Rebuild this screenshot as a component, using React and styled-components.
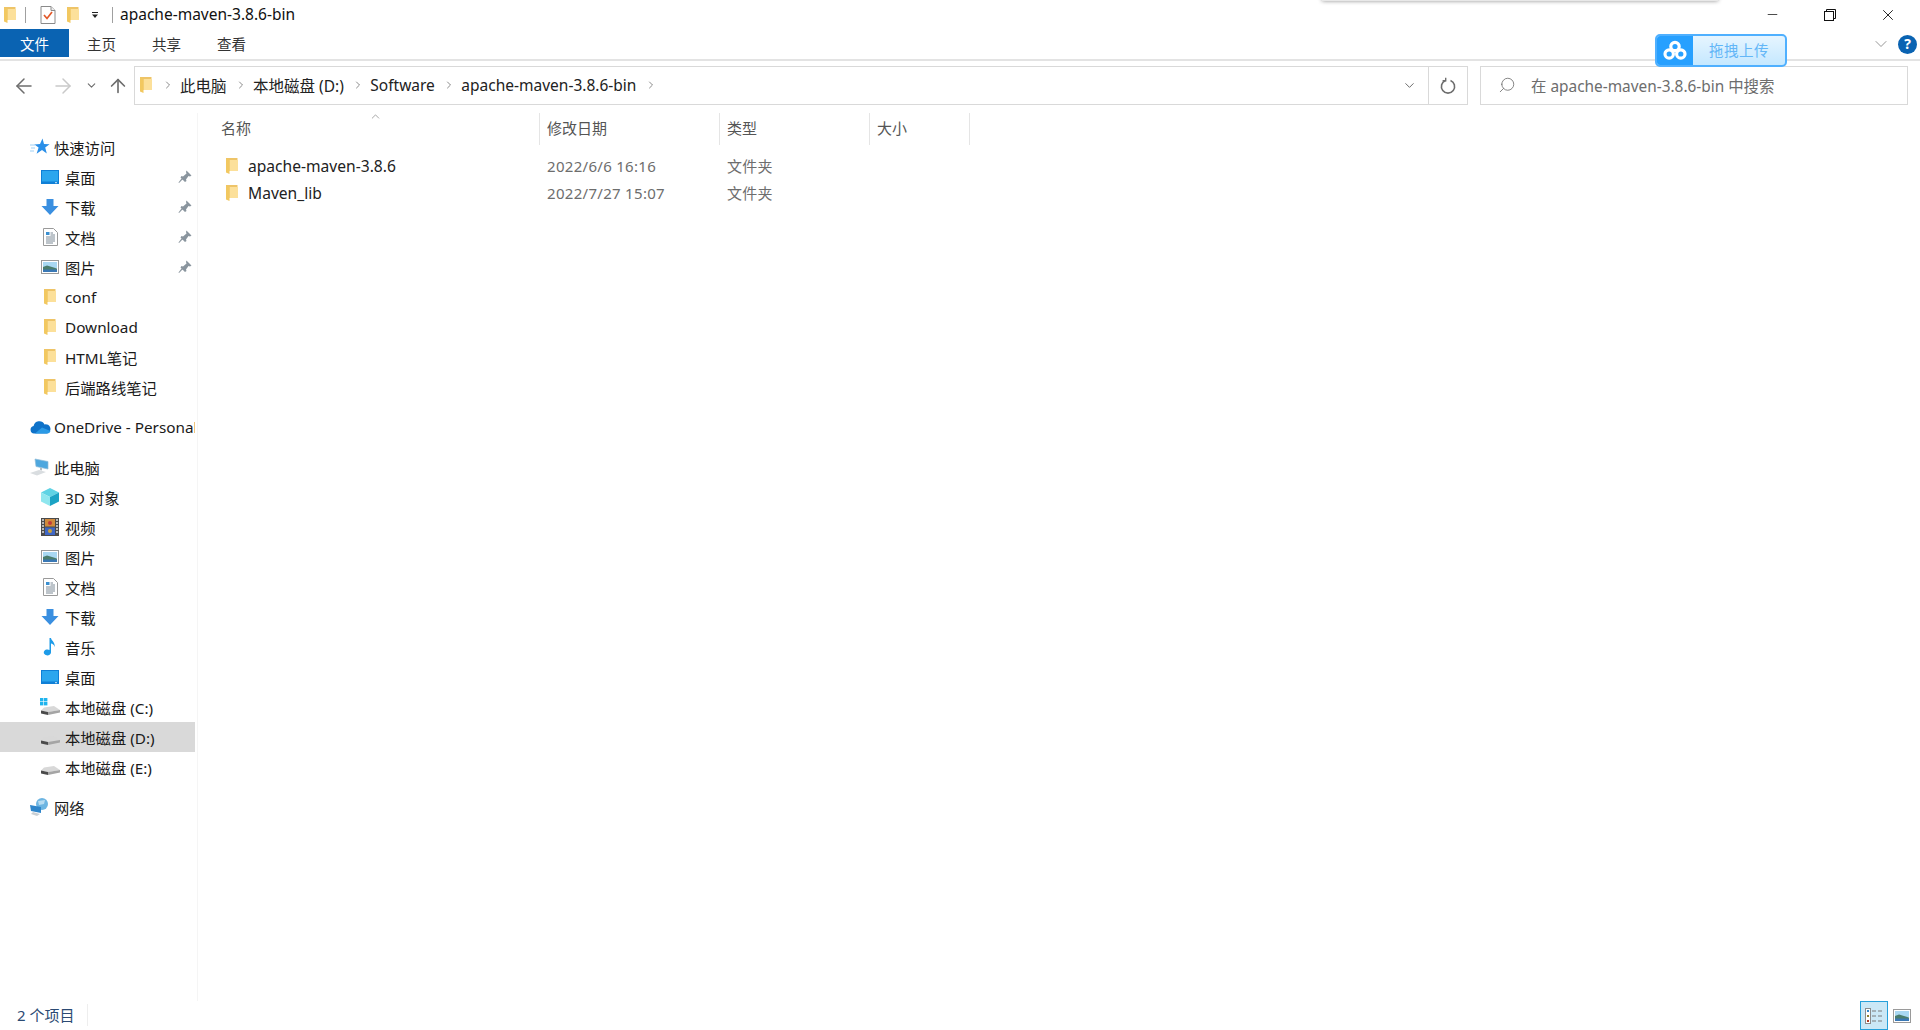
import React from 'react';
import styled, { createGlobalStyle } from 'styled-components';
import { ArrowLeft, ArrowRight, ArrowUp, ChevronDown, ChevronRight, ChevronUp, Search, Minus, X } from 'lucide-react';

const GlobalStyle = createGlobalStyle`
  html, body { margin: 0; padding: 0; background: #fff; }
  body {
    font-family: "Noto Sans", "Noto Sans CJK SC", sans-serif;
    font-size: 15.3px;
    color: #1a1a1a;
    overflow: hidden;
  }
`;

const Window = styled.div`
  position: relative;
  display: flex;
  flex-direction: column;
  width: 1920px;
  height: 1030px;
  overflow: hidden;
`;

const TopShadow = styled.div`
  position: absolute;
  top: -6px;
  left: 1322px;
  width: 396px;
  height: 7px;
  background: #e8e8e8;
  box-shadow: 0 0 4px rgba(0, 0, 0, 0.45);
`;

/* title bar */
const TitleBar = styled.div`
  display: flex;
  align-items: center;
  height: 29px;
  padding-left: 1px;
`;

const QuickTools = styled.div`
  display: flex;
  align-items: center;
`;

const ToolSep = styled.div`
  width: 1px;
  height: 16px;
  background: #a0a0a0;
  margin: ${(p) => p.$margin};
`;

const ToolSlot = styled.div`
  display: flex;
  margin-right: ${(p) => p.$right}px;
`;

const Title = styled.span`
  margin-left: 7px;
  margin-bottom: 1px;
  font-size: 15.5px;
  line-height: 20px;
  color: #111;
`;

const WinButtons = styled.div`
  display: flex;
  margin-left: auto;
  padding-right: 3px;
`;

const WinButton = styled.div`
  display: flex;
  align-items: center;
  justify-content: center;
  width: 58px;
  height: 29px;
  color: #111;
`;

/* ribbon tabs */
const TabBar = styled.div`
  display: flex;
  align-items: center;
  height: 32px;
  border-bottom: 2px solid #e3e3e3;
  box-sizing: border-box;
`;

const Tab = styled.div`
  display: flex;
  align-items: center;
  justify-content: center;
  width: ${(p) => (p.$active ? 69 : 65)}px;
  height: 28px;
  margin-bottom: 2px;
  font-size: 14.5px;
  color: ${(p) => (p.$active ? '#fff' : '#333')};
  background: ${(p) => (p.$active ? '#0a63b2' : 'transparent')};
`;

const RibbonEnd = styled.div`
  display: flex;
  align-items: center;
  gap: 7px;
  margin-left: auto;
  padding-right: 3px;
  color: #8c8c8c;
`;

const HelpBadge = styled.div`
  display: flex;
  align-items: center;
  justify-content: center;
  width: 19px;
  height: 19px;
  border-radius: 50%;
  background: #0a63b2;
  color: #fff;
  font-size: 14px;
  font-weight: 700;
  line-height: 1;
`;

const UploadWidget = styled.div`
  position: absolute;
  left: 1655px;
  top: 34px;
  display: flex;
  width: 132px;
  height: 33px;
  box-sizing: border-box;
  border: 2px solid #4fb0ff;
  border-radius: 5px;
  overflow: hidden;
  background: linear-gradient(#e6f5ff, #c5e8ff);
`;

const UploadIcon = styled.div`
  display: flex;
  align-items: center;
  justify-content: center;
  width: 36px;
  background: #27a0ff;
`;

const UploadLabel = styled.div`
  flex: 1;
  text-align: center;
  font-size: 14.5px;
  line-height: 29px;
  color: #62b6f7;
  letter-spacing: 0.5px;
`;

/* address row */
const AddressRow = styled.div`
  display: flex;
  align-items: center;
  height: 52px;
  box-sizing: border-box;
  padding: 5px 12px 8px 0;
`;

const NavButtons = styled.div`
  display: flex;
  align-items: center;
  width: 134px;
  flex: none;
`;

const NavButton = styled.div`
  display: flex;
  align-items: center;
  justify-content: center;
  width: ${(p) => p.$w}px;
  color: ${(p) => p.$color || '#6d6d6d'};
`;

const AddressBox = styled.div`
  display: flex;
  align-items: center;
  width: 1334px;
  height: 39px;
  box-sizing: border-box;
  border: 1px solid #d9d9d9;
  padding-left: 2px;
  flex: none;
`;

const Crumbs = styled.div`
  display: flex;
  align-items: center;
  flex: 1;
  padding-bottom: 1px;
`;

const Crumb = styled.span`
  font-size: 15.5px;
  color: #222;
  margin-right: 8.5px;
`;

const CrumbArrow = styled.span`
  display: flex;
  color: #6d6d6d;
  margin-left: ${(p) => p.$before ?? 0}px;
  margin-right: ${(p) => p.$after ?? 6}px;
`;

const DropCell = styled.div`
  display: flex;
  align-items: center;
  justify-content: center;
  width: 38px;
  height: 100%;
  color: #6d6d6d;
`;

const RefreshCell = styled.div`
  display: flex;
  align-items: center;
  justify-content: center;
  width: 38px;
  height: 100%;
  border-left: 1px solid #d9d9d9;
`;

const SearchBox = styled.div`
  display: flex;
  align-items: center;
  flex: 1;
  height: 39px;
  box-sizing: border-box;
  border: 1px solid #d9d9d9;
  margin-left: 12px;
  padding: 0 0 1px 17px;
  gap: 15px;
  font-size: 15.4px;
  color: #6d6d6d;
`;

const SearchGlass = styled(Search)`
  transform: scaleX(-1);
`;

/* body */
const Body = styled.div`
  display: flex;
  flex: 1;
  min-height: 0;
`;

const Side = styled.nav`
  width: 199px;
  flex: none;
  box-sizing: border-box;
  padding-top: 19px;
  background: linear-gradient(to right, #fff 197px, #f5f5f5 197px, #f5f5f5 198px, #fff 198px);
`;

const SideGroup = styled.div`
  margin-bottom: 10px;
`;

const SideRow = styled.div`
  position: relative;
  display: flex;
  align-items: center;
  width: 195px;
  height: 30px;
  box-sizing: border-box;
  padding-left: ${(p) => (p.$top ? 29 : 39)}px;
  gap: 5px;
  background: ${(p) => (p.$selected ? '#d9d9d9' : 'transparent')};
  white-space: nowrap;
  overflow: hidden;
`;

const SideIcon = styled.span`
  display: flex;
  align-items: center;
  justify-content: center;
  width: 22px;
  height: 22px;
  flex: none;
  margin-right: ${(p) => (p.$top ? -2 : -1)}px;
`;

const PinSlot = styled.span`
  position: absolute;
  left: 178px;
  top: 8px;
  display: flex;
`;

const Content = styled.main`
  flex: 1;
  min-width: 0;
`;

const HeaderRow = styled.div`
  display: flex;
  height: 32px;
`;

const HeaderCell = styled.div`
  position: relative;
  width: ${(p) => p.$w}px;
  box-sizing: border-box;
  padding-left: ${(p) => p.$pad}px;
  border-right: 1px solid #e5e5e5;
  font-size: 15px;
  line-height: 30px;
  color: #555;
`;

const SortMark = styled.span`
  position: absolute;
  left: 170px;
  top: -3px;
  display: flex;
  color: #777;
`;

const FileList = styled.div`
  padding-top: 7px;
`;

const FileRow = styled.div`
  display: flex;
  align-items: center;
  height: 27px;
`;

const NameCell = styled.div`
  display: flex;
  align-items: center;
  gap: 7px;
  width: 341px;
  box-sizing: border-box;
  padding-left: 24px;
  font-size: 15.6px;
  color: #222;
`;

const MetaCell = styled.div`
  width: ${(p) => p.$w}px;
  box-sizing: border-box;
  padding-left: 7px;
  font-size: 15px;
  letter-spacing: 0.3px;
  color: #6d6d6d;
`;

const StatusBar = styled.div`
  display: flex;
  align-items: center;
  height: 29px;
  flex: none;
  padding-left: 17px;
  font-size: 15px;
  color: #2b4a73;
`;

const StatusCount = styled.span`
  padding-right: 13px;
  margin-bottom: 2px;
  border-right: 1px solid #eee;
  line-height: 22px;
`;

const ViewButtons = styled.div`
  display: flex;
  align-items: center;
  margin-left: auto;
  padding-right: 9px;
  gap: 5px;
`;

const ViewButton = styled.div`
  display: flex;
  align-items: center;
  justify-content: center;
  width: 28px;
  height: 29px;
  box-sizing: border-box;
  border: 1px solid #26a0da;
  background: #cbe8f6;
`;

/* icons */
const FolderIcon = ({ size = 18 }) => (
  <svg width={size} height={size} viewBox="0 0 18 18">
    <path d="M3 1 H14.5 V14 H3 Z" fill="#eec468" />
    <path d="M6.5 3 H15 V14 H6.5 Z" fill="#fce09a" />
    <path d="M3 1 L6.5 3 V17 L3 15.5 Z" fill="#f2c860" />
  </svg>
);

const ChecklistIcon = () => (
  <svg width="16" height="18" viewBox="0 0 16 18">
    <path d="M1 .5 H11 L15 4.5 V17.5 H1 Z" fill="#fff" stroke="#8a8a8a" />
    <path d="M11 .5 V4.5 H15" fill="#eee" stroke="#8a8a8a" />
    <path d="M4 9 L7 12.5 L12 6" fill="none" stroke="#e2592a" strokeWidth="1.7" />
  </svg>
);

const DropMark = () => (
  <svg width="8" height="8" viewBox="0 0 8 8">
    <rect x="1" y="1" width="6" height="1" fill="#222" />
    <path d="M1 3.5 H7 L4 7 Z" fill="#222" />
  </svg>
);

const RestoreIcon = () => (
  <svg width="12" height="12" viewBox="0 0 12 12" fill="none" stroke="#111">
    <rect x=".5" y="2.5" width="9" height="9" />
    <path d="M2.5 2.5 V.5 H11.5 V9.5 H9.5" />
  </svg>
);

const RefreshIcon = () => (
  <svg width="18" height="18" viewBox="0 0 18 18" fill="none" stroke="#6d6d6d" strokeWidth="1.6">
    <path d="M11.5 3.4 A6.6 6.6 0 1 1 6.5 3.4" />
    <path d="M6.7 .8 V3.8 H3.6" strokeWidth="1.4" />
  </svg>
);

const CloudLogo = ({ size = 24 }) => (
  <svg width={size} height={size} viewBox="0 0 24 24" fill="none" stroke="#fff" strokeWidth="3.2">
    <circle cx="12" cy="7.5" r="4.2" />
    <circle cx="6.2" cy="15" r="4.2" />
    <circle cx="17.8" cy="15" r="4.2" />
  </svg>
);

const StarIcon = () => (
  <svg width="20" height="18" viewBox="0 0 20 18">
    <path d="M0 7 H5 M1 10 H5 M0 13 H4" stroke="#9fd0f5" strokeWidth="1" />
    <path d="M12.5 0.5 L14 6 L19.6 6.2 L15.2 9.6 L16.8 15.5 L12 12 L6.6 15.8 L8.6 9.6 L4.4 6.4 L10 6 Z" fill="#2a8fe8" />
  </svg>
);

const DesktopIcon = () => (
  <svg width="18" height="14" viewBox="0 0 18 14">
    <rect width="18" height="14" fill="#0f7fd6" />
    <rect x="1" y="1" width="16" height="10.5" fill="#2ba6ee" />
    <rect x="14" y="12.2" width="2" height="1" fill="#d0ecfb" />
  </svg>
);

const DownloadIcon = () => (
  <svg width="18" height="18" viewBox="0 0 18 18">
    <path d="M5.5 1 H12.5 V8 H17.5 L9 17 L.5 8 H5.5 Z" fill="#3a8fe0" />
  </svg>
);

const DocIcon = () => (
  <svg width="15" height="18" viewBox="0 0 15 18">
    <path d="M.5 .5 H10.5 L14.5 4.5 V17.5 H.5 Z" fill="#fff" stroke="#9a9a9a" />
    <rect x="3" y="4" width="3.5" height="3" fill="#3a8fd0" />
    <path d="M7.5 5 H10 M7.5 7 H12 M3 9 H12 M3 11 H12 M3 13 H12 M3 15 H10" stroke="#7d8a96" />
  </svg>
);

const PictureIcon = () => (
  <svg width="18" height="14" viewBox="0 0 18 14">
    <rect x=".5" y=".5" width="17" height="13" fill="#fff" stroke="#9a9a9a" />
    <rect x="2" y="2" width="14" height="6" fill="#a9d8f2" />
    <path d="M2 7 L6 5.5 L16 8.5 V10 H2 Z" fill="#4a7d6d" />
    <path d="M2 9.5 H16 V12 H2 Z" fill="#3a78b5" />
  </svg>
);

const PinIcon = () => (
  <svg width="14" height="14" viewBox="0 0 14 14">
    <path d="M8.5 0.5 L13.5 5.5 L12 6.5 L10.5 6 L8 9.5 L8.5 11 L7 12 L2.5 7.5 L3.5 6 L5 6.5 L8.5 3.5 L8 2 Z M4.5 9.5 L1 13 L0.5 12.5 L3.5 8.5 Z" fill="#8a959e" />
  </svg>
);

const OneDriveIcon = () => (
  <svg width="21" height="14" viewBox="0 0 21 14">
    <path d="M4 13.5 A3.8 3.8 0 0 1 3.6 6 A5.8 5.8 0 0 1 14.5 4.4 A4.6 4.6 0 0 1 17 13.5 Z" fill="#0e72c9" />
    <path d="M5 13.5 L12 7.5 L20.5 11 A3.5 3.5 0 0 1 17 13.5 Z" fill="#2a9ae6" />
  </svg>
);

const PcIcon = () => (
  <svg width="20" height="18" viewBox="0 0 20 18">
    <path d="M5 1 L18 3.5 V11 L6 8.5 Z" fill="#4ea7de" stroke="#8fbcd8" strokeWidth=".7" />
    <path d="M0 15 L9 12 L16 14 L7 17.5 Z" fill="#d9dde0" />
    <path d="M10 9.5 L12 10 V12.5 L10 12 Z" fill="#b5bcc2" />
  </svg>
);

const CubeIcon = () => (
  <svg width="18" height="18" viewBox="0 0 18 18">
    <path d="M9 0 L18 4.5 L9 9 L0 4.5 Z" fill="#5fd3e4" />
    <path d="M0 4.5 L9 9 V18 L0 13.5 Z" fill="#8fe6ee" />
    <path d="M18 4.5 L9 9 V18 L18 13.5 Z" fill="#1ba3c4" />
  </svg>
);

const FilmIcon = () => (
  <svg width="18" height="18" viewBox="0 0 18 18">
    <rect width="18" height="18" fill="#4a4a4a" />
    <rect x="4" y="1" width="10" height="7.5" fill="#d08a3c" />
    <rect x="4" y="9.5" width="10" height="7.5" fill="#3f67c4" />
    <circle cx="9" cy="5" r="2" fill="#c03a3a" />
    <circle cx="9" cy="13" r="2" fill="#c9a13a" />
    <path d="M1 2 H3 M1 5 H3 M1 8 H3 M1 11 H3 M1 14 H3 M15 2 H17 M15 5 H17 M15 8 H17 M15 11 H17 M15 14 H17" stroke="#ddd" strokeWidth="1.4" />
  </svg>
);

const MusicIcon = () => (
  <svg width="14" height="18" viewBox="0 0 14 18">
    <path d="M6.5 0 H8 C8.4 3 12.5 4 11.5 9 C11 6.5 9.5 6 8 5.6 V14.5 A3.6 3 0 1 1 6.5 12 Z" fill="#1e9be8" />
  </svg>
);

const DriveIcon = ({ windows }) => (
  <svg width="20" height="18" viewBox="0 0 20 18">
    {windows && (
      <g fill="#1fb4ee">
        <rect x="0" y="0" width="3.4" height="3.4" />
        <rect x="4" y="0" width="3.4" height="3.4" />
        <rect x="0" y="4" width="3.4" height="3.4" />
        <rect x="4" y="4" width="3.4" height="3.4" />
      </g>
    )}
    <path d="M4 9.5 L14 8 L20 12 L8 14 L1 12.5 Z" fill="#d8d8d8" />
    <path d="M1 12.5 L8 14 V17 L1 15.5 Z" fill="#4a4a4a" />
    <path d="M8 14 L20 12 V14.5 L8 17 Z" fill="#a5a5a5" />
  </svg>
);

const NetworkIcon = () => (
  <svg width="20" height="18" viewBox="0 0 20 18">
    <circle cx="12" cy="6" r="6" fill="#6db5e2" />
    <path d="M8 3 L15 2 L14 6 L9 7 Z" fill="#b7dcf2" />
    <path d="M0 7 L11 9 V15 L1 13 Z" fill="#2f86cb" />
    <path d="M3 14 L10 16 L7 18 L1 16 Z" fill="#c9cfd4" />
  </svg>
);

const DetailsIcon = () => (
  <svg width="18" height="16" viewBox="0 0 18 16">
    <rect x=".5" y=".5" width="5" height="15" fill="#fff" stroke="#8c8c8c" />
    <rect x="2" y="2" width="2" height="2" fill="#2f86cb" />
    <rect x="2" y="7" width="2" height="2" fill="#8c8030" />
    <rect x="2" y="12" width="2" height="2" fill="#b03a20" />
    <path d="M7 3 H11 M13 3 H17 M7 8 H11 M13 8 H17 M7 13 H11 M13 13 H17" stroke="#7a7a7a" />
  </svg>
);

const quickRows = [
  { label: '桌面', icon: <DesktopIcon />, pinned: true },
  { label: '下载', icon: <DownloadIcon />, pinned: true },
  { label: '文档', icon: <DocIcon />, pinned: true },
  { label: '图片', icon: <PictureIcon />, pinned: true },
  { label: 'conf', icon: <FolderIcon /> },
  { label: 'Download', icon: <FolderIcon /> },
  { label: 'HTML笔记', icon: <FolderIcon /> },
  { label: '后端路线笔记', icon: <FolderIcon /> },
];

const pcRows = [
  { label: '3D 对象', icon: <CubeIcon /> },
  { label: '视频', icon: <FilmIcon /> },
  { label: '图片', icon: <PictureIcon /> },
  { label: '文档', icon: <DocIcon /> },
  { label: '下载', icon: <DownloadIcon /> },
  { label: '音乐', icon: <MusicIcon /> },
  { label: '桌面', icon: <DesktopIcon /> },
  { label: '本地磁盘 (C:)', icon: <DriveIcon windows /> },
  { label: '本地磁盘 (D:)', icon: <DriveIcon />, selected: true },
  { label: '本地磁盘 (E:)', icon: <DriveIcon /> },
];

const files = [
  { name: 'apache-maven-3.8.6', date: '2022/6/6 16:16' },
  { name: 'Maven_lib', date: '2022/7/27 15:07' },
];

const crumbs = ['此电脑', '本地磁盘 (D:)', 'Software', 'apache-maven-3.8.6-bin'];

const NavRow = ({ row, top }) => (
  <SideRow $top={top} $selected={row.selected}>
    <SideIcon $top={top}>{row.icon}</SideIcon>
    {row.label}
    {row.pinned && (
      <PinSlot>
        <PinIcon />
      </PinSlot>
    )}
  </SideRow>
);

const App = () => {
  return (
    <Window>
      <GlobalStyle />
      <TopShadow />
      <TitleBar>
        <QuickTools>
          <FolderIcon />
          <ToolSep $margin="0 14px 0 6px" />
          <ToolSlot $right={8}><ChecklistIcon /></ToolSlot>
          <ToolSlot $right={9}><FolderIcon /></ToolSlot>
          <DropMark />
          <ToolSep $margin="0 0 0 13px" />
        </QuickTools>
        <Title>apache-maven-3.8.6-bin</Title>
        <WinButtons>
          <WinButton><Minus size={15} strokeWidth={1.2} /></WinButton>
          <WinButton><RestoreIcon /></WinButton>
          <WinButton><X size={18} strokeWidth={1.2} /></WinButton>
        </WinButtons>
      </TitleBar>

      <TabBar>
        <Tab $active>文件</Tab>
        <Tab>主页</Tab>
        <Tab>共享</Tab>
        <Tab>查看</Tab>
        <RibbonEnd>
          <ChevronDown size={20} strokeWidth={1.1} />
          <HelpBadge>?</HelpBadge>
        </RibbonEnd>
      </TabBar>

      <UploadWidget>
        <UploadIcon><CloudLogo /></UploadIcon>
        <UploadLabel>拖拽上传</UploadLabel>
      </UploadWidget>

      <AddressRow>
        <NavButtons>
          <NavButton $w={47}><ArrowLeft size={24} strokeWidth={1.5} /></NavButton>
          <NavButton $w={31} $color="#c9c9c9"><ArrowRight size={24} strokeWidth={1.5} /></NavButton>
          <NavButton $w={27}><ChevronDown size={13} strokeWidth={2} /></NavButton>
          <NavButton $w={25}><ArrowUp size={22} strokeWidth={1.8} /></NavButton>
        </NavButtons>
        <AddressBox>
          <Crumbs>
            <FolderIcon />
            <CrumbArrow $before={7} $after={6}><ChevronRight size={12} strokeWidth={1.6} /></CrumbArrow>
            {crumbs.map((c) => (
              <React.Fragment key={c}>
                <Crumb>{c}</Crumb>
                <CrumbArrow><ChevronRight size={12} strokeWidth={1.6} /></CrumbArrow>
              </React.Fragment>
            ))}
          </Crumbs>
          <DropCell><ChevronDown size={15} strokeWidth={1.6} /></DropCell>
          <RefreshCell><RefreshIcon /></RefreshCell>
        </AddressBox>
        <SearchBox>
          <SearchGlass size={18} strokeWidth={1.1} />
          在 apache-maven-3.8.6-bin 中搜索
        </SearchBox>
      </AddressRow>

      <Body>
        <Side>
          <SideGroup>
            <NavRow top row={{ label: '快速访问', icon: <StarIcon /> }} />
            {quickRows.map((row) => <NavRow key={row.label} row={row} />)}
          </SideGroup>
          <SideGroup>
            <NavRow top row={{ label: 'OneDrive - Personal', icon: <OneDriveIcon /> }} />
          </SideGroup>
          <SideGroup>
            <NavRow top row={{ label: '此电脑', icon: <PcIcon /> }} />
            {pcRows.map((row) => <NavRow key={row.label} row={row} />)}
          </SideGroup>
          <SideGroup>
            <NavRow top row={{ label: '网络', icon: <NetworkIcon /> }} />
          </SideGroup>
        </Side>
        <Content>
          <HeaderRow>
            <HeaderCell $w={341} $pad={22}>
              名称
              <SortMark><ChevronUp size={13} strokeWidth={1.2} /></SortMark>
            </HeaderCell>
            <HeaderCell $w={180} $pad={7}>修改日期</HeaderCell>
            <HeaderCell $w={150} $pad={7}>类型</HeaderCell>
            <HeaderCell $w={100} $pad={7}>大小</HeaderCell>
          </HeaderRow>
          <FileList>
            {files.map((f) => (
              <FileRow key={f.name}>
                <NameCell><FolderIcon />{f.name}</NameCell>
                <MetaCell $w={180}>{f.date}</MetaCell>
                <MetaCell $w={150}>文件夹</MetaCell>
              </FileRow>
            ))}
          </FileList>
        </Content>
      </Body>

      <StatusBar>
        <StatusCount>2 个项目</StatusCount>
        <ViewButtons>
          <ViewButton><DetailsIcon /></ViewButton>
          <PictureIcon />
        </ViewButtons>
      </StatusBar>
    </Window>
  );
};

export default App;
